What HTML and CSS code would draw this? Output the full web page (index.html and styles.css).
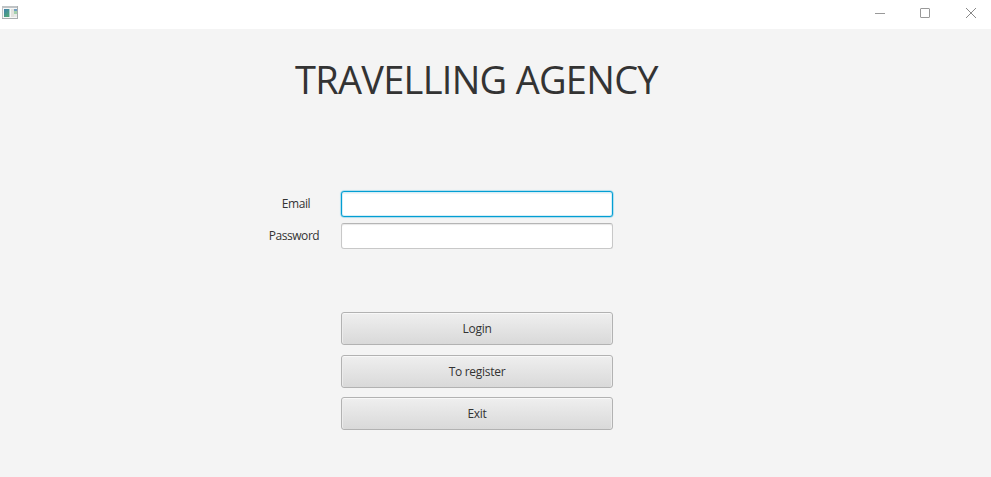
FILE: index.html
```html
<!DOCTYPE html>
<html lang="en">
<head>
<meta charset="utf-8">
<title>Travelling Agency</title>
<link rel="stylesheet" href="styles.css">
</head>
<body>
<header class="titlebar">
  <svg class="app-icon" width="16" height="14" viewBox="0 0 16 14" shape-rendering="crispEdges"><defs><linearGradient id="tile" x1="0" y1="0" x2=".6" y2="1"><stop stop-color="#3d7fae"/><stop offset="1" stop-color="#4fa57a"/></linearGradient></defs><path d="M0 0h16v13H0z" fill="#bfc3c5"/><path d="M15 0h1v13h-1zM0 12h16v1H0z" fill="#a9adaf"/><path d="M1 2h14v10H1z" fill="#f7f7f7"/><path d="M2 3h5v8H2z" fill="url(#tile)"/><path d="M7 3h1v8H7z" fill="#a9d0cf"/><path d="M9 3h3v8H9z" fill="#e2e2dd"/><path d="M12 3h3v2h-3z" fill="#6f9fc4"/><path d="M12 5h3v3h-3z" fill="#a5d1ad"/><path d="M12 8h3v3h-3z" fill="#e7e9e7"/></svg>
  <div class="controls">
    <svg width="12" height="12" viewBox="0 0 12 12"><path d="M1 6.5h10"/></svg>
    <svg width="12" height="12" viewBox="0 0 12 12"><rect x="1.5" y="1.5" width="9" height="9" rx=".5"/></svg>
    <svg width="12" height="12" viewBox="0 0 12 12"><path d="M1 1l10 10M11 1L1 11"/></svg>
  </div>
</header>
<main class="scene">
  <h1 class="title">TRAVELLING AGENCY</h1>
  <form class="form">
    <label class="label" for="email">Email</label><input class="field focused" id="email">
    <label class="label" for="password">Password</label><input class="field" id="password" type="password">
  </form>
  <div class="actions">
    <button class="button">Login</button>
    <button class="button">To register</button>
    <button class="button">Exit</button>
  </div>
</main>
</body>
</html>
```
FILE: styles.css
```css
* { box-sizing: border-box; }
body { margin: 0; width: 991px; height: 477px; overflow: hidden; background: #f4f4f4; color: #333; font-family: "Open Sans", sans-serif; font-size: 12px; }
.titlebar { height: 29px; background: #fff; display: flex; justify-content: space-between; padding: 6px 14px 0 2px; }
.controls { display: flex; gap: 33.5px; padding-top: 1px; }
.controls svg { fill: none; stroke: #999; }
.controls svg:nth-child(2) { margin: 0 .5px 0 -.5px; }
.controls svg:nth-child(3) { stroke: #888; }
.scene { display: flex; flex-direction: column; }
.title { width: 364px; height: 58px; margin: 21px 0 0 295px; font-size: 38px; font-weight: 400; line-height: 58px; letter-spacing: -.72px; white-space: nowrap; }
.form { display: grid; grid-template-columns: 94px 272px; grid-auto-rows: 26px; row-gap: 6px; margin: 83px 0 0 247px; }
.label { width: 94px; line-height: 26px; text-align: center; letter-spacing: -.45px; }
.label:first-child { padding-left: 4px; }
.field { height: 26px; border: 1px solid #c8c8c8; border-top-color: #b5b5b5; border-radius: 3px; background: #fff; outline: none; box-shadow: inset 0 1px 1px #e8e8e8; }
.focused { border-color: #039ed3; box-shadow: 0 0 0 .5px #8bd0e8, 0 0 2px #a5ddef, inset 0 0 0 1px #d5eff8, inset 0 2px 1px #eef3f5; }
.actions { display: flex; flex-direction: column; gap: 9.5px; width: 272px; margin: 63px 0 0 341px; }
.button { height: 33px; border: 1px solid #b2b2b2; border-radius: 3px; background: linear-gradient(#efefef, #d9d9d9); box-shadow: inset 0 1px #f8f8f8, inset 1px 0 #ececec, inset -1px 0 #ececec; font: inherit; letter-spacing: -.28px; color: #333; padding: 0; }
```
